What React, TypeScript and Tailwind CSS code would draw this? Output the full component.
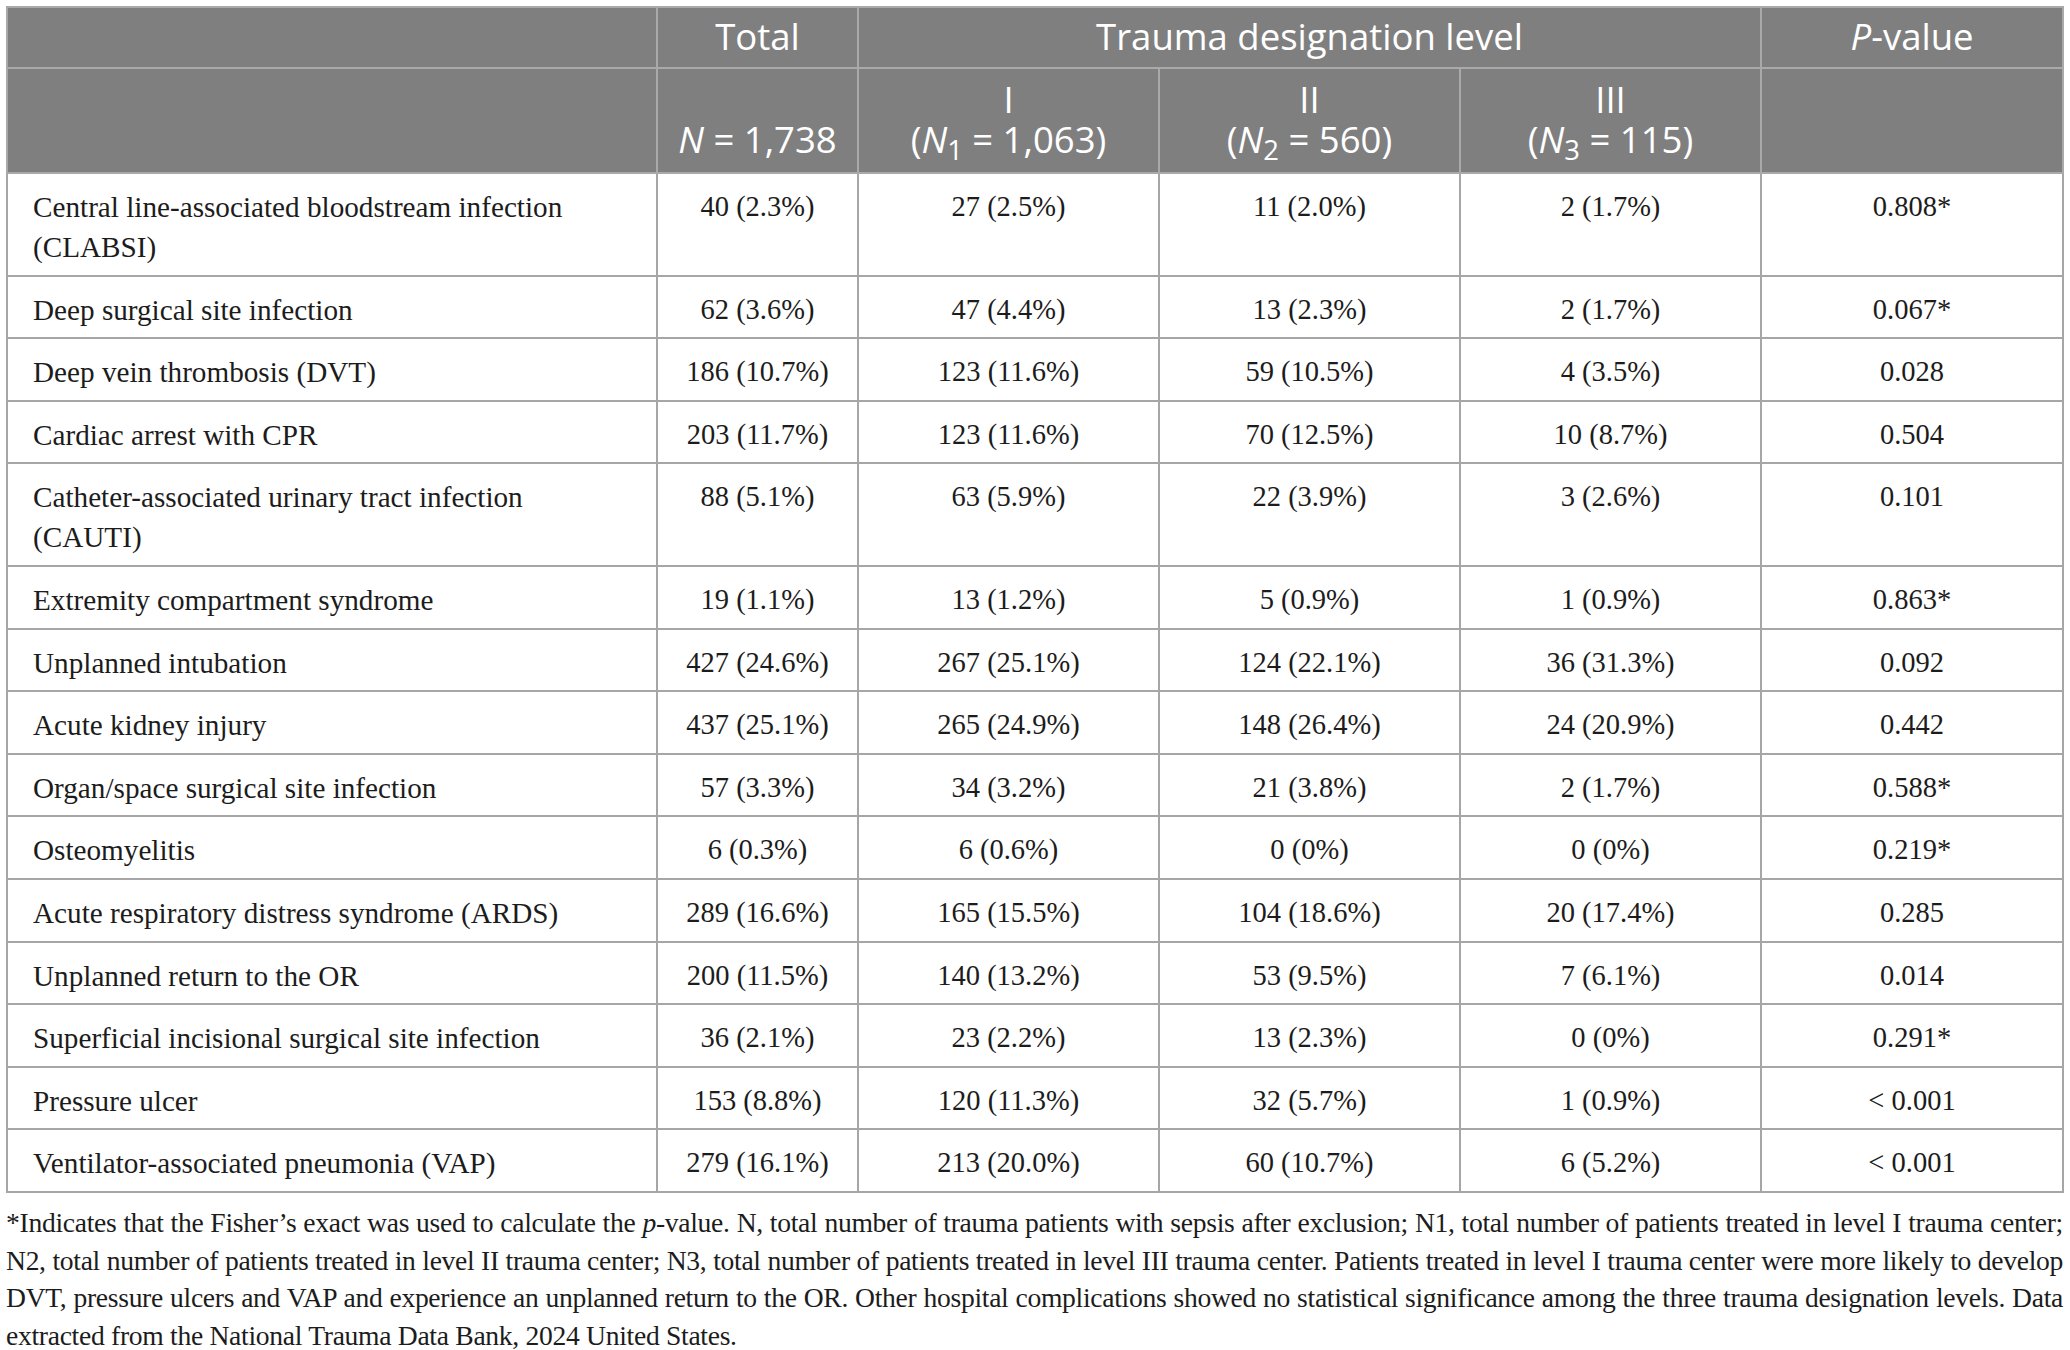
import React from "react";

type Row = {
  label: React.ReactNode;
  total: string;
  l1: string;
  l2: string;
  l3: string;
  p: string;
};

const rows: Row[] = [
  { label: <>Central line-associated bloodstream infection<br />(CLABSI)</>, total: "40 (2.3%)", l1: "27 (2.5%)", l2: "11 (2.0%)", l3: "2 (1.7%)", p: "0.808*" },
  { label: "Deep surgical site infection", total: "62 (3.6%)", l1: "47 (4.4%)", l2: "13 (2.3%)", l3: "2 (1.7%)", p: "0.067*" },
  { label: "Deep vein thrombosis (DVT)", total: "186 (10.7%)", l1: "123 (11.6%)", l2: "59 (10.5%)", l3: "4 (3.5%)", p: "0.028" },
  { label: "Cardiac arrest with CPR", total: "203 (11.7%)", l1: "123 (11.6%)", l2: "70 (12.5%)", l3: "10 (8.7%)", p: "0.504" },
  { label: <>Catheter-associated urinary tract infection<br />(CAUTI)</>, total: "88 (5.1%)", l1: "63 (5.9%)", l2: "22 (3.9%)", l3: "3 (2.6%)", p: "0.101" },
  { label: "Extremity compartment syndrome", total: "19 (1.1%)", l1: "13 (1.2%)", l2: "5 (0.9%)", l3: "1 (0.9%)", p: "0.863*" },
  { label: "Unplanned intubation", total: "427 (24.6%)", l1: "267 (25.1%)", l2: "124 (22.1%)", l3: "36 (31.3%)", p: "0.092" },
  { label: "Acute kidney injury", total: "437 (25.1%)", l1: "265 (24.9%)", l2: "148 (26.4%)", l3: "24 (20.9%)", p: "0.442" },
  { label: "Organ/space surgical site infection", total: "57 (3.3%)", l1: "34 (3.2%)", l2: "21 (3.8%)", l3: "2 (1.7%)", p: "0.588*" },
  { label: "Osteomyelitis", total: "6 (0.3%)", l1: "6 (0.6%)", l2: "0 (0%)", l3: "0 (0%)", p: "0.219*" },
  { label: "Acute respiratory distress syndrome (ARDS)", total: "289 (16.6%)", l1: "165 (15.5%)", l2: "104 (18.6%)", l3: "20 (17.4%)", p: "0.285" },
  { label: "Unplanned return to the OR", total: "200 (11.5%)", l1: "140 (13.2%)", l2: "53 (9.5%)", l3: "7 (6.1%)", p: "0.014" },
  { label: "Superficial incisional surgical site infection", total: "36 (2.1%)", l1: "23 (2.2%)", l2: "13 (2.3%)", l3: "0 (0%)", p: "0.291*" },
  { label: "Pressure ulcer", total: "153 (8.8%)", l1: "120 (11.3%)", l2: "32 (5.7%)", l3: "1 (0.9%)", p: "< 0.001" },
  { label: "Ventilator-associated pneumonia (VAP)", total: "279 (16.1%)", l1: "213 (20.0%)", l2: "60 (10.7%)", l3: "6 (5.2%)", p: "< 0.001" },
];

const th = "border-2 border-[#a9a9a9] bg-[#7f7f7f] text-white font-normal text-center px-2";
const td = "border-2 border-[#a6a6a6] align-top pt-[13px] pb-[7.6px] text-center";

export default function App() {
  return (
    <div className="min-h-screen bg-white pl-[6px] pt-[6px] font-['Liberation_Serif',serif] text-[#1c1c1c]">
      <table className="table-fixed border-collapse w-[2058px]">
        <colgroup>
          <col className="w-[650px]" />
          <col className="w-[201px]" />
          <col className="w-[301px]" />
          <col className="w-[301px]" />
          <col className="w-[301px]" />
          <col className="w-[302px]" />
        </colgroup>
        <thead className="font-['Open_Sans',sans-serif] text-[36.5px] leading-[40px]">
          <tr>
            <th className={`${th} pt-[8px] pb-[11px]`}></th>
            <th className={`${th} pt-[8px] pb-[11px]`}>Total</th>
            <th className={`${th} pt-[8px] pb-[11px]`} colSpan={3}>Trauma designation level</th>
            <th className={`${th} pt-[8px] pb-[11px]`}><i>P</i>-value</th>
          </tr>
          <tr>
            <th className={`${th} align-bottom pt-[10px] pb-[13px]`}></th>
            <th className={`${th} align-bottom pt-[10px] pb-[13px]`}><i>N</i> = 1,738</th>
            <th className={`${th} align-bottom pt-[10px] pb-[13px]`}>I<br />(<i>N</i><sub>1</sub> = 1,063)</th>
            <th className={`${th} align-bottom pt-[10px] pb-[13px]`}>II<br />(<i>N</i><sub>2</sub> = 560)</th>
            <th className={`${th} align-bottom pt-[10px] pb-[13px]`}>III<br />(<i>N</i><sub>3</sub> = 115)</th>
            <th className={`${th} align-bottom pt-[10px] pb-[13px]`}></th>
          </tr>
        </thead>
        <tbody className="text-[28.5px] leading-[40px]">
          {rows.map((r, i) => (
            <tr key={i}>
              <td className={`${td} !text-left pl-[25px] pr-2 text-[29.2px]`}>{r.label}</td>
              <td className={td}>{r.total}</td>
              <td className={td}>{r.l1}</td>
              <td className={td}>{r.l2}</td>
              <td className={td}>{r.l3}</td>
              <td className={td}>{r.p}</td>
            </tr>
          ))}
        </tbody>
      </table>

      <div className="w-[2057px] mt-[11px] text-[27.6px] tracking-[-0.3px] leading-[37.6px] text-justify">
        <p className="[text-align-last:justify]">
          *Indicates that the Fisher’s exact was used to calculate the <i>p</i>-value. N, total number of trauma patients with sepsis after exclusion; N1, total number of patients treated in level I trauma center;
        </p>
        <p className="[text-align-last:justify]">
          N2, total number of patients treated in level II trauma center; N3, total number of patients treated in level III trauma center. Patients treated in level I trauma center were more likely to develop
        </p>
        <p className="[text-align-last:justify]">
          DVT, pressure ulcers and VAP and experience an unplanned return to the OR. Other hospital complications showed no statistical significance among the three trauma designation levels. Data
        </p>
        <p>extracted from the National Trauma Data Bank, 2024 United States.</p>
      </div>
    </div>
  );
}
